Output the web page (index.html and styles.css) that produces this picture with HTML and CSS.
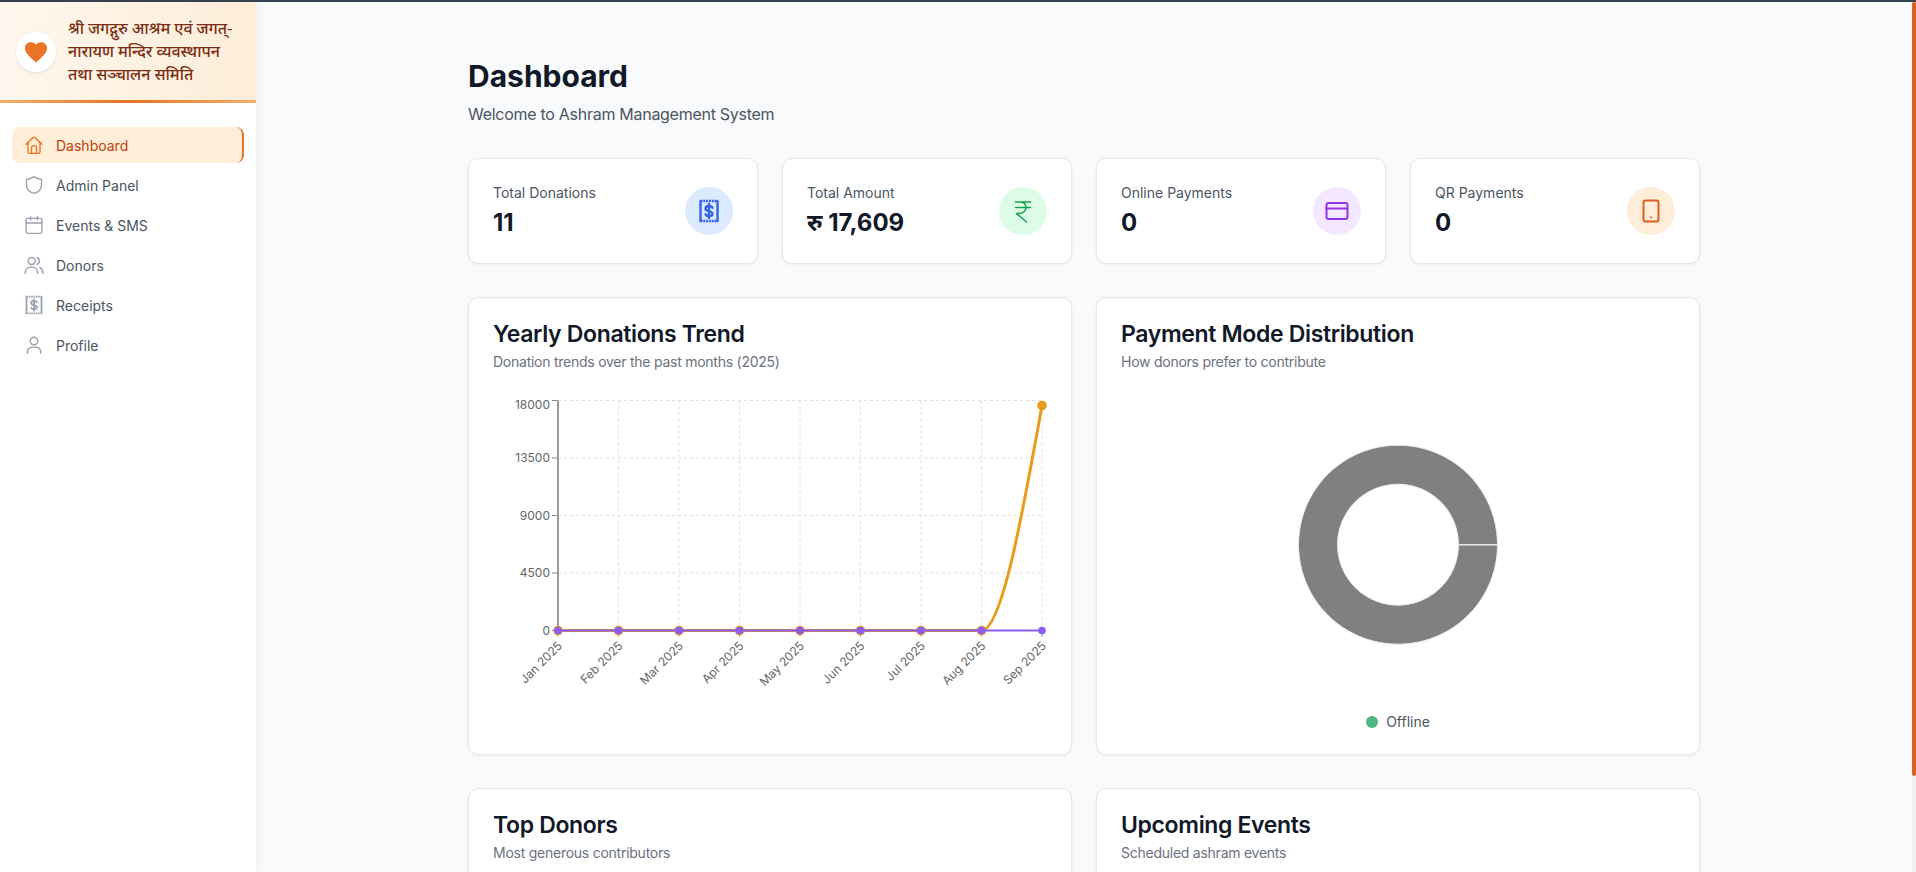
FILE: index.html
```html
<!DOCTYPE html>
<html lang="en">
<head>
    <meta charset="UTF-8">
    <meta name="viewport" content="width=device-width, initial-scale=1.0">
    <title>Ashram Dashboard</title>
    <link rel="stylesheet" href="styles.css">
</head>
<body>

    <div class="top-line"></div>

    <div class="shell">

        <!-- Sidebar -->
        <aside class="sidebar">
            <div class="brand">
                <div class="brand-logo">
                    <svg viewBox="0 0 24 24" width="26" height="26"><path fill="#ea7325" d="M12 21.6l-1.500-1.300C5.200 15.500 1.800 12.400 1.800 8.500 1.800 5.400 4.200 3 7.300 3c1.800 0 3.500.8 4.700 2.200C13.200 3.800 14.900 3 16.700 3c3.100 0 5.500 2.400 5.500 5.500 0 3.900-3.400 7-8.700 11.800z"/></svg>
                </div>
                <p class="brand-name">श्री जगद्गुरु आश्रम एवं जगत्-नारायण मन्दिर व्यवस्थापन तथा सञ्चालन समिति</p>
            </div>

            <nav class="nav">
                <a class="nav-item active" href="#">
                    <svg class="nav-icon" viewBox="0 0 24 24"><path d="M2.500 11 10.700 3.200a1.900 1.900 0 0 1 2.600 0L21.500 11"/><path d="M4.800 9v11a2 2 0 0 0 2 2h10.400a2 2 0 0 0 2-2V9"/><path d="M9 22v-7a2 2 0 0 1 2-2h2a2 2 0 0 1 2 2v7"/></svg>
                    Dashboard
                </a>
                <a class="nav-item" href="#">
                    <svg class="nav-icon" viewBox="0 0 24 24"><path d="M12 2c2.500 2 5.500 3 9 3.300V12c0 5-3.500 8.500-9 10-5.500-1.500-9-5-9-10V5.300C6.500 5 9.500 4 12 2z"/></svg>
                    Admin Panel
                </a>
                <a class="nav-item" href="#">
                    <svg class="nav-icon" viewBox="0 0 24 24"><rect x="2.500" y="4" width="19" height="18" rx="2"/><path d="M8 2v4M16 2v4M2.500 9.500h19"/></svg>
                    Events &amp; SMS
                </a>
                <a class="nav-item" href="#">
                    <svg class="nav-icon" viewBox="0 0 24 24"><circle cx="9.200" cy="7.200" r="4.200"/><path d="M1.500 22v-1c0-4 3.500-6.500 7.500-6.500s7.500 2.500 7.500 6.500v1"/><path d="M15.500 3.200a4.200 4.200 0 0 1 0 8M19 15c2.200 1 3.500 3 3.500 6v1"/></svg>
                    Donors
                </a>
                <a class="nav-item" href="#">
                    <svg class="nav-icon receipt" viewBox="0 0 24 24"><path stroke-dasharray="2 .8" stroke-linecap="butt" d="M3 2h18M3 22h18"/><path d="M3 2v20M21 2v20"/><path d="M15.500 8.800C15 7.500 13.700 7 12 7c-2 0-3.500 1-3.500 2.700 0 3.400 7 1.800 7 5 0 1.500-1.500 2.400-3.500 2.400-1.700 0-3-.6-3.500-1.800M12 5v14"/></svg>
                    Receipts
                </a>
                <a class="nav-item" href="#">
                    <svg class="nav-icon" viewBox="0 0 24 24"><circle cx="12" cy="7.200" r="4.500"/><path d="M4 22v-2c0-3.500 3-5.500 8-5.500s8 2 8 5.500v2"/></svg>
                    Profile
                </a>
            </nav>
        </aside>

        <!-- Main Content -->
        <main class="main">
            <div class="container">

                <div class="page-header">
                    <h1>Dashboard</h1>
                    <p>Welcome to Ashram Management System</p>
                </div>

                <div class="stats">
                    <div class="stat-card">
                        <div>
                            <div class="stat-label">Total Donations</div>
                            <div class="stat-value">11</div>
                        </div>
                        <div class="stat-icon blue">
                            <svg class="bold" viewBox="0 0 24 24"><path stroke-dasharray="2 .8" stroke-linecap="butt" d="M3.500 2h17M3.500 22h17"/><path d="M3.500 2v20M20.500 2v20"/><path d="M15.500 8.800C15 7.500 13.700 7 12 7c-2 0-3.500 1-3.500 2.700 0 3.400 7 1.800 7 5 0 1.500-1.500 2.400-3.500 2.400-1.700 0-3-.6-3.500-1.800M12 5v14"/></svg>
                        </div>
                    </div>
                    <div class="stat-card">
                        <div>
                            <div class="stat-label">Total Amount</div>
                            <div class="stat-value">रु 17,609</div>
                        </div>
                        <div class="stat-icon green">
                            <svg class="thin" viewBox="0 0 24 24"><path d="M4.500 3h15M4.500 8.500h15M8.500 3c4 0 6.500 2.200 6.500 5.500S12 14.500 8 14.500H5.500L15.500 23"/></svg>
                        </div>
                    </div>
                    <div class="stat-card">
                        <div>
                            <div class="stat-label">Online Payments</div>
                            <div class="stat-value">0</div>
                        </div>
                        <div class="stat-icon purple">
                            <svg viewBox="0 0 24 24"><rect x="1.500" y="4" width="21" height="16" rx="2"/><path d="M1.500 9.500h21"/></svg>
                        </div>
                    </div>
                    <div class="stat-card">
                        <div>
                            <div class="stat-label">QR Payments</div>
                            <div class="stat-value">0</div>
                        </div>
                        <div class="stat-icon orange">
                            <svg viewBox="0 0 24 24"><rect x="4.500" y="1.500" width="15" height="21" rx="2"/><path d="M12 18.500h.01"/></svg>
                        </div>
                    </div>
                </div>

                <div class="panels">
                    <div class="panel chart-panel">
                        <h2>Yearly Donations Trend</h2>
                        <p class="panel-sub">Donation trends over the past months (2025)</p>
                        <svg class="chart" viewBox="0 0 602 300">
                            <g id="chart-grid" class="grid"></g>
                            <g id="chart-axis" class="axis"></g>
                            <g id="chart-lines"></g>
                        </svg>
                    </div>

                    <div class="panel chart-panel">
                        <h2>Payment Mode Distribution</h2>
                        <p class="panel-sub">How donors prefer to contribute</p>
                        <svg class="chart" viewBox="0 0 602 300">
                            <path fill="#808080" stroke="#eeeeee" stroke-width="1" fill-rule="evenodd"
                                d="M400.500 149.700 A99.500 99.500 0 1 0 400.500 149.710 Z M361.500 149.700 A60.500 60.500 0 1 0 361.500 149.710 Z"/>
                            <path stroke="#e8e8e8" stroke-width="1.500" d="M361.500 149.700H400.500"/>
                        </svg>
                        <div class="legend"><span class="legend-dot"></span>Offline</div>
                    </div>

                    <div class="panel">
                        <h2>Top Donors</h2>
                        <p class="panel-sub">Most generous contributors</p>
                    </div>

                    <div class="panel">
                        <h2>Upcoming Events</h2>
                        <p class="panel-sub">Scheduled ashram events</p>
                    </div>
                </div>

            </div>
        </main>

        <div class="scroll-track"><div class="scroll-thumb"></div></div>
    </div>

<script>
    // Line chart, axis origin sits at x=89 and the zero line at y=235 inside the svg
    const SVG_NS = 'http://www.w3.org/2000/svg';
    const months = ['Jan', 'Feb', 'Mar', 'Apr', 'May', 'Jun', 'Jul', 'Aug', 'Sep'];
    const left = 89, step = 60.5, base = 235.5, top_ = 5.5;
    const yTicks = [0, 4500, 9000, 13500, 18000];

    function add(parent, tag, attrs, text) {
        const el = document.createElementNS(SVG_NS, tag);
        for (const key in attrs) el.setAttribute(key, attrs[key]);
        if (text) el.textContent = text;
        document.getElementById(parent).appendChild(el);
    }

    const right = left + step * 8;
    const yOf = v => base - (v / 18000) * (base - top_);

    yTicks.forEach(v => {
        const y = yOf(v);
        if (v > 0) add('chart-grid', 'line', { x1: left, x2: right, y1: y, y2: y });
        add('chart-axis', 'line', { x1: left - 6, x2: left, y1: y, y2: y });
        add('chart-axis', 'text', { x: left - 8, y: y + (v === 18000 ? 8 : 4), 'text-anchor': 'end' }, String(v));
    });

    months.forEach((m, i) => {
        const x = left + step * i;
        if (i > 0) add('chart-grid', 'line', { x1: x, x2: x, y1: top_, y2: base });
        add('chart-axis', 'line', { x1: x, x2: x, y1: base, y2: base + 6 });
        add('chart-axis', 'text', { x: x + 5, y: base + 16, 'text-anchor': 'end', transform: 'rotate(-45 ' + (x + 5) + ' ' + (base + 16) + ')' }, m + ' 2025');
    });

    add('chart-axis', 'line', { x1: left, x2: left, y1: top_, y2: base, class: 'axis-main' });

    // Orange series: donations
    const aug = left + step * 7, sep = right, peak = yOf(17609);
    add('chart-lines', 'path', {
        d: 'M' + left + ' ' + base + 'H' + aug + 'C' + (aug + step / 3) + ' ' + base + ' ' + (aug + step * 2 / 3) + ' ' + (peak + 112.5) + ' ' + sep + ' ' + peak,
        fill: 'none', stroke: '#e89b1c', 'stroke-width': 3
    });
    months.forEach((m, i) => {
        add('chart-lines', 'circle', { cx: left + step * i, cy: i === 8 ? peak : base, r: 4.8, fill: '#e89b1c' });
    });

    // Purple series: donation count
    add('chart-lines', 'path', { d: 'M' + left + ' ' + base + 'H' + sep, fill: 'none', stroke: '#8b5cf6', 'stroke-width': 2 });
    months.forEach((m, i) => {
        add('chart-lines', 'circle', { cx: left + step * i, cy: base, r: 3.8, fill: '#8b5cf6' });
    });
</script>

</body>
</html>
```

FILE: styles.css
```css
* { margin: 0; padding: 0; box-sizing: border-box; }

html, body { height: 100%; overflow: hidden; }

body {
    font-family: Inter, "Noto Sans", sans-serif;
    background: #f9fafb;
    color: #111827;
    display: flex;
    flex-direction: column;
}

.top-line { height: 2px; background: #374151; flex-shrink: 0; }

.shell {
    flex: 1;
    display: flex;
    min-height: 0;
}

/* Sidebar */
.sidebar {
    width: 256px;
    flex-shrink: 0;
    background: #fff;
    box-shadow: 2px 0 8px rgba(0, 0, 0, 0.05);
    z-index: 2;
}

.brand {
    height: 101px;
    display: flex;
    align-items: center;
    gap: 12px;
    padding: 1px 16px 0;
    background: linear-gradient(90deg, #fff7ed, #fdedd9);
    border-bottom: 3px solid;
    border-image: linear-gradient(90deg, #f6b26b, #e8731f, #f6b26b) 1;
}

.brand-logo {
    width: 40px; height: 40px;
    flex-shrink: 0;
    border-radius: 50%;
    background: #fff;
    box-shadow: 0 1px 3px rgba(0, 0, 0, 0.1);
    display: flex;
    align-items: center;
    justify-content: center;
}

.brand-name {
    font-family: "Liberation Serif", "Noto Sans", serif;
    font-size: 16px;
    font-weight: 500;
    line-height: 23px;
    color: #7c2d12;
}

.nav {
    display: flex;
    flex-direction: column;
    gap: 4px;
    padding: 24px 12px;
}

.nav-item {
    height: 36px;
    display: flex;
    align-items: center;
    gap: 12px;
    padding: 0 12px;
    border-radius: 8px;
    font-size: 14px;
    font-weight: 400;
    color: #4b5563;
    text-decoration: none;
}
.nav-item.active {
    background: #fdedd9;
    color: #c2410c;
    border-right: 2px solid #ea7325;
}

.nav-icon {
    width: 20px; height: 20px;
    fill: none;
    stroke: #9ca3af;
    stroke-width: 1.7;
    stroke-linecap: round;
    stroke-linejoin: round;
    flex-shrink: 0;
}
.nav-item.active .nav-icon { stroke: #ea7325; }
.nav-icon.receipt { stroke-width: 2.2; }

/* Content */
.main {
    flex: 1;
    min-width: 0;
    overflow: hidden;
}

.container {
    max-width: 1280px;
    margin: 0 auto;
    padding: 56px 24px 0;
}

.page-header { margin-bottom: 32px; }
.page-header h1 { font-size: 30px; line-height: 36px; font-weight: 700; }
.page-header p { margin-top: 8px; font-size: 16px; line-height: 24px; color: #4b5563; letter-spacing: -0.28px; }

.stats {
    display: grid;
    grid-template-columns: repeat(4, minmax(0, 1fr));
    gap: 24px;
    margin-bottom: 33px;
}

.stat-card, .panel {
    background: #fff;
    border: 1px solid #e5e7eb;
    border-radius: 10px;
    box-shadow: 0 1px 3px rgba(0, 0, 0, 0.06);
}

.stat-card {
    height: 106px;
    display: flex;
    align-items: center;
    justify-content: space-between;
    padding: 0 24px;
}

.stat-label { font-size: 14px; line-height: 20px; font-weight: 400; color: #4b5563; }
.stat-value { margin-top: 4px; font-size: 24px; line-height: 32px; font-weight: 700; }

.stat-icon {
    width: 48px; height: 48px;
    border-radius: 50%;
    display: flex;
    align-items: center;
    justify-content: center;
}
.stat-icon svg {
    width: 24px; height: 24px;
    fill: none;
    stroke: currentColor;
    stroke-width: 2;
    stroke-linecap: round;
    stroke-linejoin: round;
}
.stat-icon svg.thin { stroke-width: 1.5; }
.stat-icon svg.bold { stroke-width: 2.4; }
.stat-icon.blue { background: #dbeafe; color: #3563e9; }
.stat-icon.green { background: #dcfce7; color: #16a34a; }
.stat-icon.purple { background: #f3e8ff; color: #9333ea; }
.stat-icon.orange { background: #fdedd9; color: #dd5f1f; }

.panels {
    display: grid;
    grid-template-columns: repeat(2, minmax(0, 1fr));
    gap: 33px 24px;
}

.panel { padding: 24px; min-height: 200px; }
.chart-panel { height: 458px; padding-bottom: 0; }

.panel h2 { font-size: 23px; line-height: 24px; font-weight: 600; letter-spacing: -0.35px; color: #111827; }
.panel-sub { margin-top: 6px; font-size: 14px; line-height: 20px; color: #6b7280; letter-spacing: -0.25px; }

.chart {
    display: block;
    width: 602px;
    height: 300px;
    margin: 23px -24px 0;
}

.grid line {
    stroke: #e0e0e0;
    stroke-width: 1;
    stroke-dasharray: 3 3;
}
.axis line { stroke: #888; stroke-width: 1; }
.axis .axis-main { stroke: #999; stroke-width: 2; }
.axis text { font-size: 12px; fill: #666; }

.legend {
    display: flex;
    align-items: center;
    justify-content: center;
    gap: 8px;
    margin-top: 18px;
    font-size: 14px;
    color: #4b5563;
}
.legend-dot {
    width: 12px; height: 12px;
    border-radius: 50%;
    background: #4cb782;
}

/* Scrollbar strip */
.scroll-track {
    width: 4px;
    flex-shrink: 0;
    background: #f1f1f1;
}
.scroll-thumb {
    height: 774px;
    background: #dd5f1f;
    border-radius: 4px;
}
```
